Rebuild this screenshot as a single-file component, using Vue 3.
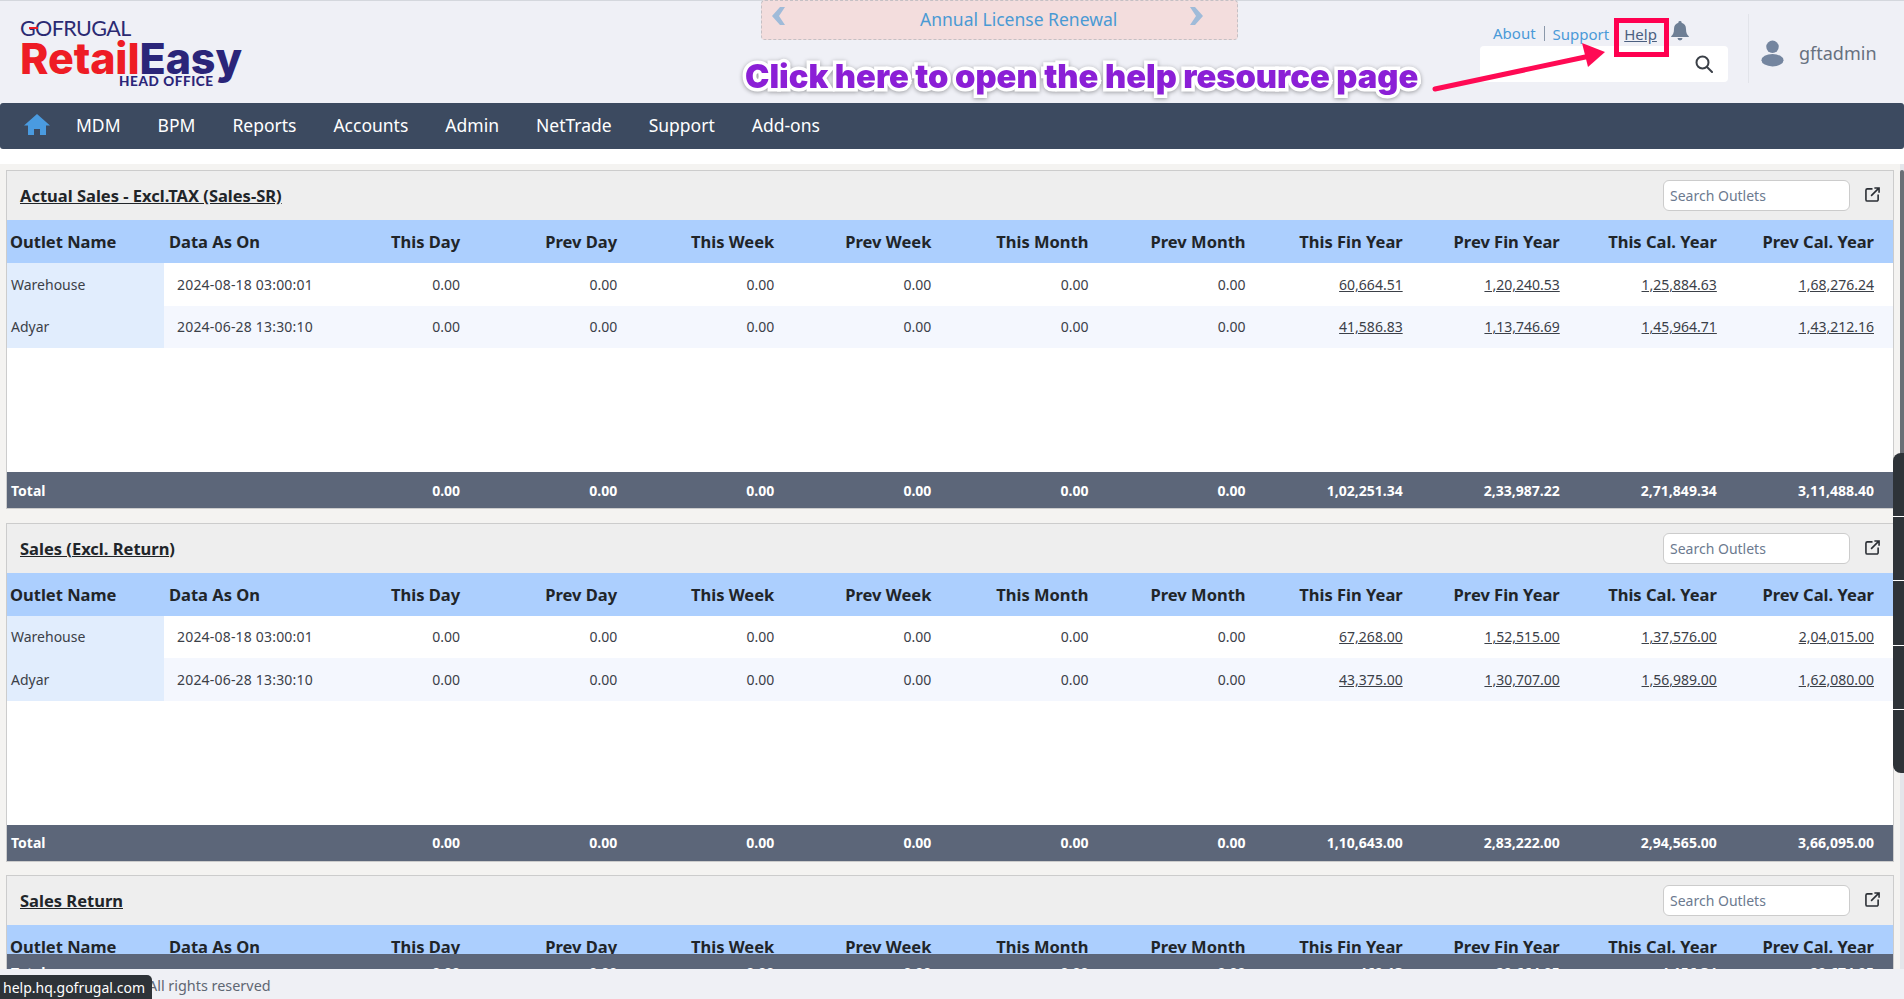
<script setup>
const navItems = ['MDM', 'BPM', 'Reports', 'Accounts', 'Admin', 'NetTrade', 'Support', 'Add-ons']
const columns = ['This Day', 'Prev Day', 'This Week', 'Prev Week', 'This Month', 'Prev Month', 'This Fin Year', 'Prev Fin Year', 'This Cal. Year', 'Prev Cal. Year']
const colWidths = [157, 143, 157.1, 157.1, 157.1, 157.1, 157.1, 157.1, 157.1, 157.1, 157.1, 172.1]
const zeros = ['0.00', '0.00', '0.00', '0.00', '0.00', '0.00']
const panels = [
  {
    title: 'Actual Sales - Excl.TAX (Sales-SR)',
    rows: [
      { name: 'Warehouse', date: '2024-08-18 03:00:01', links: ['60,664.51', '1,20,240.53', '1,25,884.63', '1,68,276.24'] },
      { name: 'Adyar', date: '2024-06-28 13:30:10', links: ['41,586.83', '1,13,746.69', '1,45,964.71', '1,43,212.16'] }
    ],
    total: ['1,02,251.34', '2,33,987.22', '2,71,849.34', '3,11,488.40']
  },
  {
    title: 'Sales (Excl. Return)',
    rows: [
      { name: 'Warehouse', date: '2024-08-18 03:00:01', links: ['67,268.00', '1,52,515.00', '1,37,576.00', '2,04,015.00'] },
      { name: 'Adyar', date: '2024-06-28 13:30:10', links: ['43,375.00', '1,30,707.00', '1,56,989.00', '1,62,080.00'] }
    ],
    total: ['1,10,643.00', '2,83,222.00', '2,94,565.00', '3,66,095.00']
  },
  {
    title: 'Sales Return',
    clipped: true,
    rows: [],
    total: ['469.13', '29,664.05', '4,156.34', '29,674.05']
  }
]
</script>

<template>
  <div class="page">
    <header class="top">
      <div class="logo">
        <div class="logo-brand">GOFRUGAL</div>
        <span class="logo-dash"></span>
        <div class="logo-name"><span class="red">Retail</span><span class="navy">Easy</span></div>
        <div class="logo-sub">HEAD OFFICE</div>
      </div>
      <div class="banner">
        <svg class="chev" viewBox="0 0 14 18"><path d="M9 0h5L8 9l6 9H9L1 9z" /></svg>
        <span class="banner-text">Annual License Renewal</span>
        <svg class="chev next" viewBox="0 0 14 18"><path d="M5 0H0l6 9-6 9h5l8-9z" /></svg>
      </div>
      <div class="right">
        <div class="tools">
          <div class="links">
            <a class="link about">About</a>
            <a class="link">Support</a>
            <a class="link help">Help</a>
            <svg class="bell" viewBox="0 0 18 20"><path d="M9 0a1.600 1.600 0 0 1 1.600 1.800C13.600 2.600 15 5 15 8c0 3.800 1 5.500 2.800 7.300V16H.2v-.7C2 13.500 3 11.800 3 8c0-3 1.400-5.400 4.400-6.200A1.600 1.600 0 0 1 9 0zM6.500 17h5a2.500 2.500 0 0 1-5 0z" /></svg>
          </div>
          <div class="search">
            <svg class="search-icon" viewBox="0 0 18 18"><circle cx="7.500" cy="7.500" r="6" /><path d="M12 12l5 5" /></svg>
          </div>
        </div>
        <div class="user">
          <svg class="user-icon" viewBox="0 0 24 28"><circle cx="12" cy="7" r="6.500" /><ellipse cx="12" cy="21" rx="11.500" ry="6.500" /></svg>
          <span>gftadmin</span>
        </div>
      </div>
    </header>

    <nav class="nav">
      <svg class="home" viewBox="0 0 26 21"><path d="M13 0l13 11.500h-4V21h-6v-6h-6v6H4v-9.500H0z" /></svg>
      <a v-for="item in navItems" :key="item">{{ item }}</a>
    </nav>

    <main class="main">
      <section v-for="p in panels" :key="p.title" class="panel" :class="{ clipped: p.clipped }">
        <div class="panel-head">
          <h2>{{ p.title }}</h2>
          <input class="outlet-search" placeholder="Search Outlets" />
          <svg class="open" viewBox="0 0 16 16"><path d="M8 2H2.500A1.500 1.500 0 0 0 1 3.500v10A1.500 1.500 0 0 0 2.500 15h10a1.500 1.500 0 0 0 1.500-1.500V8M6.500 9.500L15 1M10 1h5v5" /></svg>
        </div>
        <div class="scroll">
          <table>
            <colgroup><col v-for="(w, i) in colWidths" :key="i" :style="{ width: w + 'px' }" /></colgroup>
            <thead>
              <tr>
                <th class="left">Outlet Name</th>
                <th class="left second">Data As On</th>
                <th v-for="c in columns" :key="c">{{ c }}</th>
              </tr>
            </thead>
            <tbody>
              <tr v-for="r in p.rows" :key="r.name">
                <td class="name">{{ r.name }}</td>
                <td class="date">{{ r.date }}</td>
                <td v-for="(z, i) in zeros" :key="i">{{ z }}</td>
                <td v-for="l in r.links" :key="l"><u>{{ l }}</u></td>
              </tr>
            </tbody>
          </table>
        </div>
        <table class="total">
          <colgroup><col v-for="(w, i) in colWidths" :key="i" :style="{ width: w + 'px' }" /></colgroup>
          <tbody>
            <tr>
              <td class="left">Total</td>
              <td></td>
              <td v-for="(z, i) in zeros" :key="i">{{ z }}</td>
              <td v-for="t in p.total" :key="t">{{ t }}</td>
            </tr>
          </tbody>
        </table>
      </section>
    </main>

    <footer class="foot">All rights reserved</footer>

    <div class="track"><div class="thumb"></div></div>
    <div class="side-tab"><i></i><i></i><i></i><i></i><i></i></div>
    <div class="tooltip">help.hq.gofrugal.com</div>

    <div class="callout">Click here to open the help resource page</div>
    <svg class="arrow" viewBox="0 0 190 60"><path d="M5 49L160 16" /><path class="head" d="M152 3l23 9-17 15z" /></svg>
    <div class="help-box"></div>
  </div>
</template>

<style scoped>
.page {
  position: relative;
  width: 1904px;
  height: 999px;
  display: flex;
  flex-direction: column;
  overflow: hidden;
  background: #fff;
  font-family: "Noto Sans", "Open Sans", sans-serif;
  color: #212529;
}
.top {
  height: 103px;
  box-sizing: border-box;
  flex: none;
  display: grid;
  grid-template-columns: 761px 477px 1fr;
  background: #eff0f6;
  border-top: 1px solid #d4d7dd;
}
.logo { position: relative; padding: 15px 0 0 20px; }
.logo-brand {
  font-family: Lato, sans-serif;
  font-size: 21.500px;
  line-height: 24px;
  letter-spacing: -.6px;
  color: #2b2a72;
}
.logo-dash {
  position: absolute;
  left: 29px;
  top: 26px;
  width: 9px;
  height: 2px;
  background: #ee1c25;
}
.logo-name {
  font-family: Inter, sans-serif;
  font-weight: 800;
  font-size: 43px;
  line-height: 44px;
  letter-spacing: -.1px;
  margin-top: -4px;
}
.red { color: #ee1c25; }
.navy { color: #2b2579; }
.logo-sub {
  position: absolute;
  left: 119px;
  top: 73px;
  font-family: Lato, sans-serif;
  font-weight: 900;
  font-size: 13.500px;
  line-height: 14px;
  letter-spacing: .6px;
  color: #2b2579;
}
.banner {
  height: 40px;
  margin-top: -1px;
  box-sizing: border-box;
  display: flex;
  align-items: center;
  padding: 0 0 2px 9px;
  background: #f3dddd;
  border: 1px dashed #c4c0c4;
  border-radius: 4px;
  color: #4a9ad4;
  font-size: 17.500px;
}
.banner-text { margin-left: 135px; white-space: nowrap; }
.chev { width: 14px; height: 18px; margin-top: -6px; fill: #9fbbd9; flex: none; }
.next { margin-left: 73px; }
.right { display: flex; justify-content: flex-end; padding: 13px 30px 0 0; }
.tools { width: 248px; }
.links {
  height: 32px;
  display: flex;
  align-items: center;
  padding: 7px 0 0 13px;
  box-sizing: border-box;
  font-size: 15px;
  position: relative;
}
.link { color: #4a9ad8; }
.about { padding-right: 8px; margin-right: 8px; border-right: 1px solid #8a98aa; line-height: 15px; }
.help { margin-left: 15px; color: #4b5f80; text-decoration: underline; }
.bell { width: 18px; height: 20px; margin: -6px 0 0 14px; fill: #6e7f95; flex: none; }
.search {
  height: 36px;
  background: #fff;
  border-radius: 4px;
  display: flex;
  justify-content: flex-end;
  align-items: center;
  padding-right: 15px;
}
.search-icon { width: 18px; height: 18px; fill: none; stroke: #3a3f47; stroke-width: 2; stroke-linecap: round; }
.user {
  width: 126px;
  height: 69px;
  margin-left: 20px;
  border-left: 1px solid #e2e4ea;
  display: flex;
  align-items: center;
  gap: 15px;
  padding: 9px 0 0 12px;
  box-sizing: border-box;
  font-size: 18px;
  color: #67717f;
}
.user-icon { width: 23px; height: 27px; fill: #74859f; flex: none; }
.nav {
  height: 46px;
  flex: none;
  box-sizing: border-box;
  display: flex;
  align-items: center;
  gap: 37px;
  padding: 0 0 2px 24px;
  background: #3c4a60;
  border-radius: 3px;
  color: #fff;
  font-size: 17.500px;
}
.home { width: 26px; height: 21px; margin: -2px -11px 0 0; fill: #4a9be0; }
.main {
  flex: 1;
  min-height: 0;
  overflow: hidden;
  margin-top: 15px;
  padding: 6px 10px 0 6px;
  display: flex;
  flex-direction: column;
  gap: 13.500px;
  background: #f4f3f1;
}
.panel {
  flex: none;
  width: 1888px;
  box-sizing: border-box;
  border: 1px solid #ccc;
  background: #fff;
}
.panel-head {
  height: 49px;
  display: flex;
  align-items: center;
  padding: 0 13px 0 13px;
  background: #eee;
}
.panel-head h2 {
  flex: 1;
  margin: 0;
  font-size: 16.500px;
  font-weight: 700;
  text-decoration: underline;
}
.outlet-search {
  width: 187px;
  height: 31px;
  box-sizing: border-box;
  padding: 0 6px;
  background: #fff;
  border: 1px solid #ccc;
  border-radius: 6px;
  font: 14px "Noto Sans", sans-serif;
}
.outlet-search::placeholder { color: #6c7a8f; opacity: 1; }
.open {
  width: 15px;
  height: 15px;
  margin-left: 15px;
  margin-top: -2px;
  fill: none;
  stroke: #2a2e34;
  stroke-width: 1.700;
}
.scroll { height: 252px; overflow: hidden; }
.clipped .scroll { height: 29px; }
table { width: 1886px; table-layout: fixed; border-collapse: collapse; }
th {
  height: 43px;
  padding: 0 4px 0 0;
  background: #accffe;
  font-size: 16.500px;
  font-weight: 700;
  text-align: right;
  white-space: nowrap;
}
td {
  height: 42.500px;
  padding: 0 4px 0 0;
  font-size: 14px;
  color: #3b4048;
  text-align: right;
  white-space: nowrap;
}
th:last-child, td:last-child { padding-right: 19px; }
th.left { text-align: left; padding-left: 3px; }
th.second { padding-left: 5px; }
tbody tr:nth-child(2) td { background: #f4f7fe; }
td.name, tbody tr:nth-child(2) td.name { background: #e1edfd; text-align: left; padding-left: 4px; }
td.date { text-align: left; padding-left: 13px; letter-spacing: .19px; }
.total td {
  height: 36px;
  background: #5c6679;
  color: #fff;
  font-weight: 700;
}
.total td.left { text-align: left; padding-left: 4px; }
.foot {
  height: 30px;
  flex: none;
  box-sizing: border-box;
  padding: 7px 0 0 148px;
  background: #eff0f5;
  color: #5f6773;
  font-size: 14.400px;
  position: relative;
}
.track {
  position: absolute;
  left: 1900px;
  top: 164px;
  width: 4px;
  height: 805px;
  background: #e4e5ea;
}
.thumb {
  margin-top: 6px;
  height: 400px;
  background: #6a6e75;
  border-radius: 2px;
}
.side-tab {
  position: absolute;
  left: 1893px;
  top: 453px;
  width: 11px;
  height: 320px;
  display: flex;
  flex-direction: column;
  border-radius: 8px 0 0 8px;
  overflow: hidden;
}
.side-tab i { flex: 1; background: #2e3338; border-top: 1px solid #fff; }
.side-tab i:first-child { border-top: 0; }
.tooltip {
  position: absolute;
  left: 0;
  bottom: 0;
  width: 152px;
  height: 24px;
  box-sizing: border-box;
  padding: 1px 0 0 3px;
  line-height: 24px;
  background: #2e3338;
  border-radius: 0 5px 0 0;
  color: #fff;
  font-size: 14px;
  white-space: nowrap;
}
.callout {
  position: absolute;
  left: 745px;
  top: 55px;
  font-family: Inter, sans-serif;
  font-weight: 900;
  font-size: 32.700px;
  line-height: 42px;
  white-space: nowrap;
  color: #8b1fd6;
  -webkit-text-stroke: 7px #fff;
  paint-order: stroke fill;
  filter: drop-shadow(0 1px 2px rgba(0, 0, 0, .35));
}
.arrow {
  position: absolute;
  left: 1430px;
  top: 40px;
  width: 190px;
  height: 60px;
  fill: none;
}
.arrow path { stroke: #ff0a54; stroke-width: 5; stroke-linecap: round; }
.arrow .head { fill: #ff0a54; stroke: none; }
.help-box {
  position: absolute;
  left: 1614px;
  top: 18px;
  width: 55px;
  height: 39px;
  box-sizing: border-box;
  border: 5px solid #ff0050;
}
</style>
